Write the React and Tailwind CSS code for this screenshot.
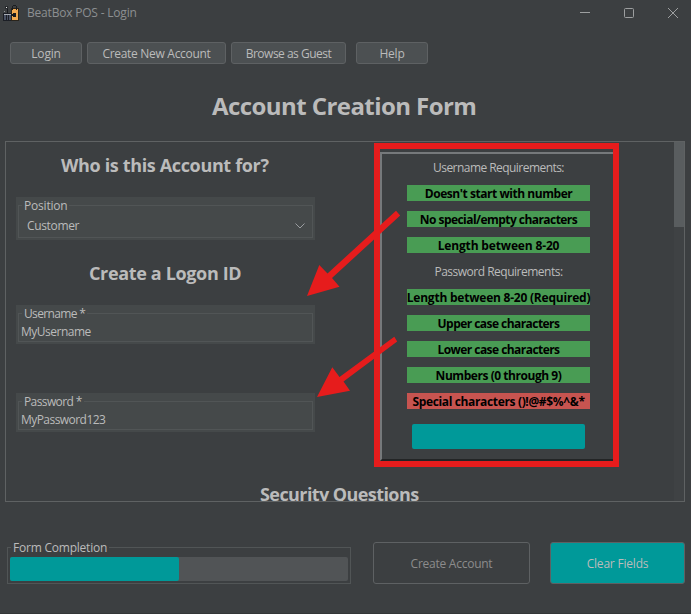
function AppIcon() {
  return (
    <svg width="16" height="16" viewBox="0 0 16 16" shapeRendering="crispEdges">
      <rect x="2" y="1" width="3" height="3" fill="#26292c" />
      <rect x="3" y="2" width="1" height="1" fill="#f0f0f0" />
      <rect x="4" y="4" width="1" height="5" fill="#17191d" />
      <rect x="1" y="6" width="1" height="1" fill="#8d9297" />
      <rect x="0" y="8" width="9" height="8" fill="#1b1e25" />
      <rect x="1" y="10" width="2" height="5" fill="#4a5264" />
      <rect x="4" y="10" width="1" height="5" fill="#4a5264" />
      <rect x="6" y="10" width="2" height="5" fill="#4a5264" />
      <rect x="1" y="9" width="7" height="1" fill="#a9aeb6" />
      <rect x="8" y="3" width="8" height="13" fill="#2a241b" />
      <rect x="9" y="4" width="6" height="11" fill="#f0a850" />
      <rect x="10" y="0" width="3" height="1" fill="#1b1d20" />
      <rect x="9" y="1" width="1" height="4" fill="#1b1d20" />
      <rect x="13" y="1" width="1" height="4" fill="#1b1d20" />
      <rect x="10" y="8" width="3" height="4" fill="#17191d" />
      <rect x="8" y="9" width="5" height="2" fill="#17191d" />
    </svg>
  );
}

function TitleBar() {
  return (
    <div className="flex h-[26px] items-center pl-[3px] pr-[12px]">
      <AppIcon />
      <span className="ml-2 text-[#8c8f91] tracking-[-0.2px]">BeatBox POS - Login</span>
      <svg className="ml-auto" width="100" height="12" viewBox="0 0 100 12" fill="none" stroke="#9d9fa0">
        <path d="M1 5.5h10" />
        <rect x="45.5" y="1.5" width="9" height="9" rx="1" />
        <path d="M89 1l10 10M99 1l-10 10" />
      </svg>
    </div>
  );
}

function MenuButton({ className, children }) {
  return (
    <button className={`h-[22px] rounded-[3px] border border-[#5e6163] bg-[#4c5052] leading-[22px] whitespace-nowrap ${className}`}>
      {children}
    </button>
  );
}

function Legend({ bg, children, className }) {
  return (
    <span className={`absolute -top-[9px] px-[2px] h-[18px] leading-[18px] whitespace-nowrap ${bg} ${className}`}>
      {children}
    </span>
  );
}

function Field({ label, labelClass, height, children }) {
  return (
    <div className={`w-[299px] bg-[#45494a] px-[2px] pt-[8px] pb-[2px] ${height}`}>
      <div className="relative h-full border border-[#515556]">
        <Legend bg="bg-[#45494a]" className={`left-[3px] ${labelClass}`}>{label}</Legend>
        {children}
      </div>
    </div>
  );
}

function Rule({ bad, className, children }) {
  return (
    <div className={`mb-[10px] h-[16px] w-[183px] text-center font-bold leading-[17px] whitespace-nowrap text-black flex justify-center ${bad ? "bg-[#c75450]" : "bg-[#499c54]"}`}>
      <span className={className}>{children}</span>
    </div>
  );
}

export default function App() {
  return (
    <div className="relative h-[614px] w-[691px] overflow-hidden border-b border-[#333637] bg-[#3c3f41] font-['Open_Sans','Noto_Sans',sans-serif] text-[12px] text-[#bbbbbb]">
      <TitleBar />
      <div className="mt-[16px] flex pl-[10px]">
        <MenuButton className="w-[72px] tracking-[-0.2px]">Login</MenuButton>
        <MenuButton className="ml-[5px] w-[139px] tracking-[-0.3px]">Create New Account</MenuButton>
        <MenuButton className="ml-[5px] w-[115px] tracking-[-0.5px]">Browse as Guest</MenuButton>
        <MenuButton className="ml-[10px] w-[72px] tracking-[-0.2px]">Help</MenuButton>
      </div>
      <h1 className="mt-[25px] h-[34px] pl-[212px] text-[24px] font-bold leading-[34px] tracking-[-0.57px] whitespace-nowrap">Account Creation Form</h1>

      <main className="ml-[5px] mt-[18px] flex h-[361px] w-[680px] overflow-hidden border border-[#5f6263]">
        <div className="w-[369px] pl-[10px]">
          <h2 className="mt-[11px] h-[24px] pl-[45px] text-[18px] font-bold leading-[24px] tracking-[-0.35px] whitespace-nowrap">Who is this Account for?</h2>
          <div className="mt-[20px]">
            <Field label="Position" height="h-[43px]" labelClass="tracking-[-0.2px]">
              <div className="flex items-center justify-between pt-[11px] pl-[8px] pr-[7px] leading-[18px]">
                <span className="tracking-[-0.35px]">Customer</span>
                <svg width="10" height="6" viewBox="0 0 10 6" fill="none" stroke="#9a9da0"><path d="M.5 .5L5 5L9.500 .5" /></svg>
              </div>
            </Field>
          </div>
          <h2 className="mt-[21px] h-[24px] pl-[73px] text-[18px] font-bold leading-[24px] tracking-[-0.35px] whitespace-nowrap">Create a Logon ID</h2>
          <div className="mt-[20px]">
            <Field label="Username *" height="h-[39px]" labelClass="tracking-[-0.65px]">
              <div className="pl-[2px] pt-[9px] leading-[18px] tracking-[-0.5px]">MyUsername</div>
            </Field>
          </div>
          <div className="mt-[49px]">
            <Field label="Password *" height="h-[39px]" labelClass="tracking-[-0.6px]">
              <div className="pl-[2px] pt-[9px] leading-[18px] tracking-[-0.55px]">MyPassword123</div>
            </Field>
          </div>
          <h2 className="mt-[50px] h-[24px] pl-[244px] text-[18px] font-bold leading-[24px] tracking-[-0.58px] whitespace-nowrap">Security Questions</h2>
        </div>

        <section className="-ml-px mt-[1px] h-[324px] w-[245px] border-[6px] border-[#e61c1c] pt-[3px]">
          <div className="flex h-[309px] flex-col items-center border-l-2 border-t-2 border-b-2 border-l-[#76797b] border-t-[#76797b] border-b-[#232526] pl-[2px]">
            <div className="mt-[5px] mb-[8px] h-[18px] leading-[18px]"><span className="tracking-[-0.55px]">Username Requirements:</span></div>
            <Rule className="tracking-[-0.45px]">Doesn't start with number</Rule>
            <Rule className="tracking-[-0.55px]">No special/empty characters</Rule>
            <Rule className="tracking-[-0.15px]">Length between 8-20</Rule>
            <div className="mb-[8px] h-[18px] leading-[18px]"><span className="tracking-[-0.5px]">Password Requirements:</span></div>
            <Rule className="tracking-[-0.22px]">Length between 8-20 (Required)</Rule>
            <Rule className="tracking-[-0.55px]">Upper case characters</Rule>
            <Rule className="tracking-[-0.55px]">Lower case characters</Rule>
            <Rule className="tracking-[-0.45px]">Numbers (0 through 9)</Rule>
            <Rule bad className="tracking-[-0.35px]">Special characters ()!@#$%^&amp;*</Rule>
            <div className="mt-[5px] h-[25px] w-[173px] shrink-0 rounded-[2px] bg-[#009999]" />
          </div>
        </section>

        <div className="ml-auto w-[10px] bg-[#3f4244]">
          <div className="h-[85px] bg-[#595d5f]" />
        </div>
      </main>

      <footer className="mt-[40px] flex pl-[7px]">
        <div className="relative mt-[5px] h-[37px] w-[344px] border border-[#515556] px-[2px] pt-[9px]">
          <Legend bg="bg-[#3c3f41]" className="left-[3px] tracking-[-0.22px]">Form Completion</Legend>
          <div className="h-[24px] w-[338px] rounded-[2px] bg-[#515456]">
            <div className="h-full w-[169px] rounded-[2px] bg-[#009999]" />
          </div>
        </div>
        <button className="ml-[22px] h-[42px] w-[157px] rounded-[3px] border border-[#5e6163] pt-[2px] text-[#8c8c8c] tracking-[-0.25px]">Create Account</button>
        <button className="ml-[20px] h-[42px] w-[135px] rounded-[3px] border border-[#5e6163] bg-[#009999] pt-[2px] tracking-[-0.2px]">Clear Fields</button>
      </footer>

      <svg className="pointer-events-none absolute left-0 top-0" width="691" height="614" fill="#e61c1c">
        <path d="M396 210.800L400.200 215.500L332 278L339.500 286.700L307 296L319.300 265L327.500 273.500Z" />
        <path d="M394.300 336.800L397.200 341.500L343.500 381.500L350 390.800L317 397L332.300 367.300L339.500 377Z" />
      </svg>
    </div>
  );
}
